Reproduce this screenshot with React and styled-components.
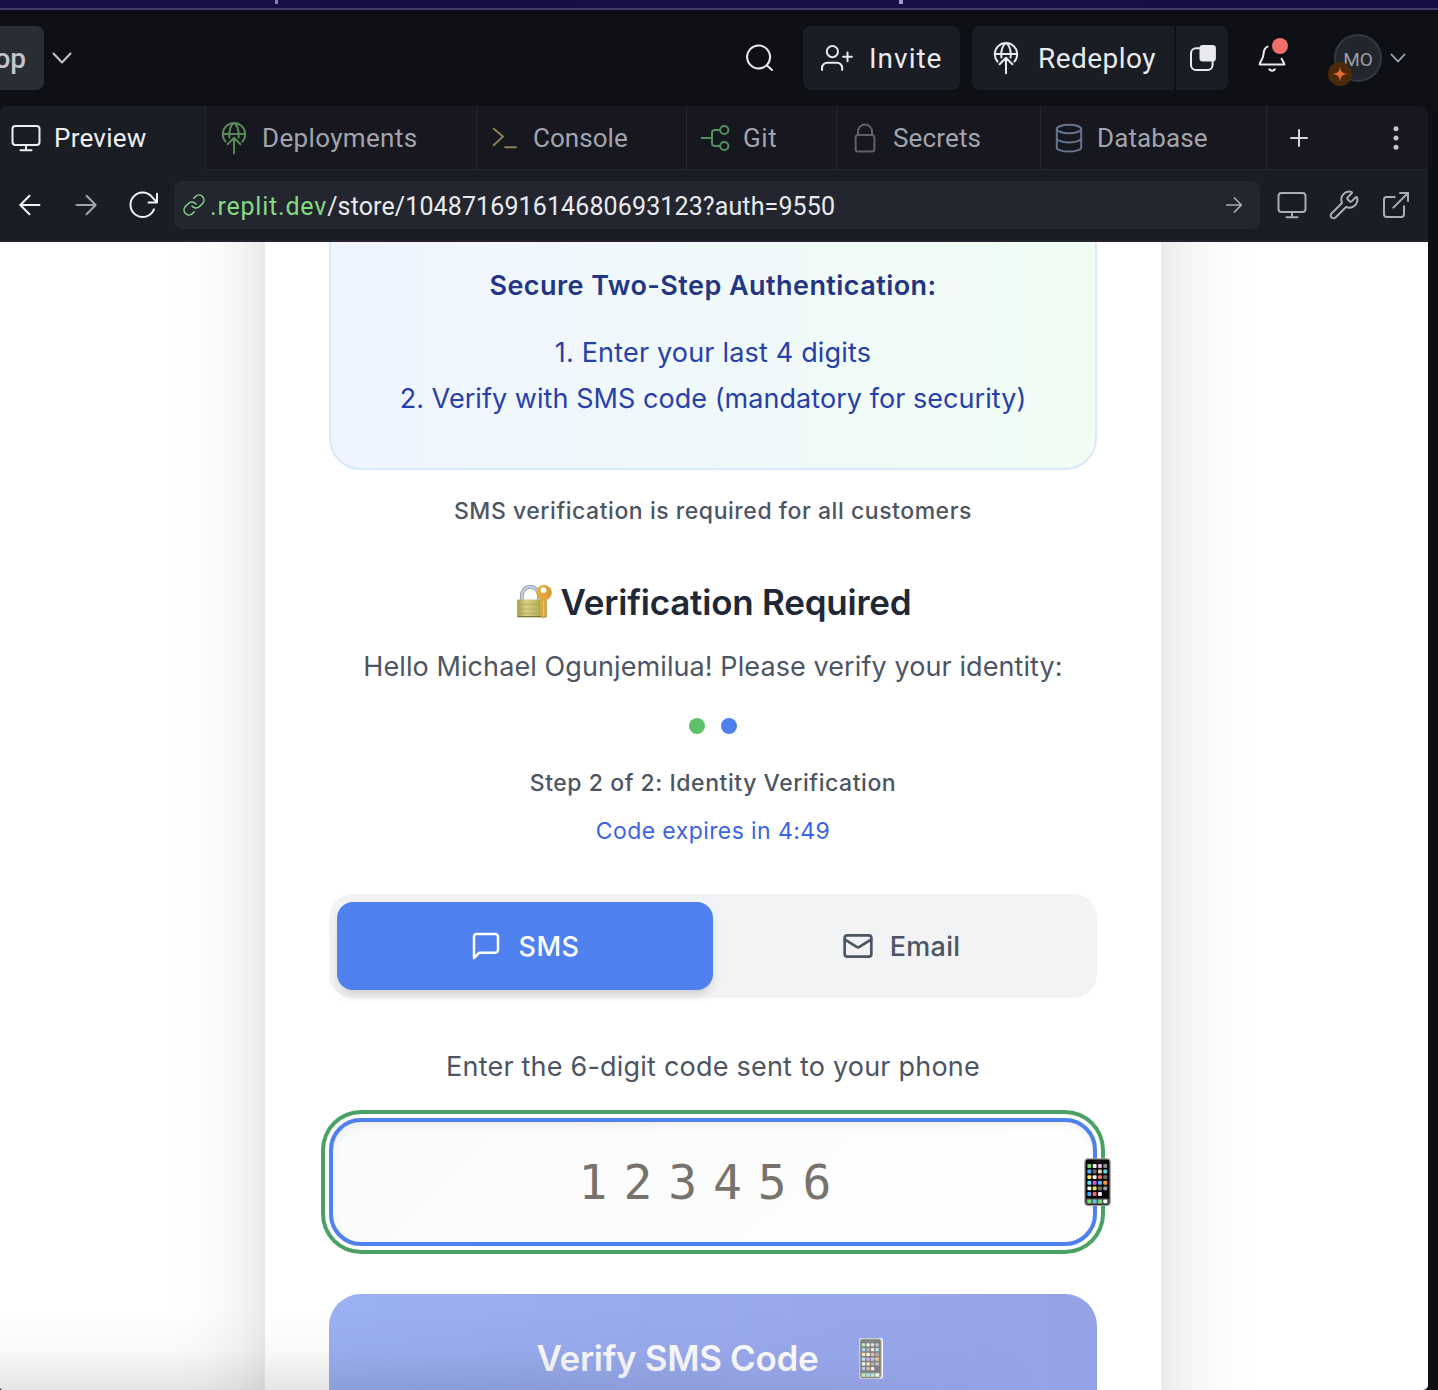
import React from "react";
import styled, { createGlobalStyle } from "styled-components";
import { Wrench, ExternalLink, Link as LinkIcon, Mail } from "lucide-react";

const Global = createGlobalStyle`
  * { box-sizing: border-box; }
  html, body { margin: 0; padding: 0; background: #0f1015; }
  body { overflow: hidden; }
  button, input { font: inherit; border: 0; margin: 0; padding: 0; background: none; color: inherit; }
  svg { display: block; flex: none; }
  p, h2, h3 { margin: 0; }
`;

const Shell = styled.div`
  width: 1438px;
  height: 1390px;
  display: flex;
  flex-direction: column;
  background: #0e0f14;
  font-family: Roboto, "Liberation Sans", sans-serif;
  color: #e9eaee;
  overflow: hidden;
`;

const Backdrop = styled.div`
  height: 10px;
  flex: none;
  border-bottom: 2px solid #443d69;
  background:
    linear-gradient(#8580a8, #8580a8) 275px 0 / 3px 4px no-repeat,
    linear-gradient(#a29fc4, #a29fc4) 899px 0 / 4px 4px no-repeat,
    linear-gradient(90deg, #1a0f45, #160e42 30%, #191048 60%, #170c42);
`;

const Header = styled.header`
  height: 96px;
  flex: none;
  display: flex;
  align-items: center;
  background: #0f1015;
`;

const AppName = styled.div`
  width: 44px;
  height: 64px;
  padding-right: 18px;
  display: flex;
  align-items: center;
  justify-content: flex-end;
  border-radius: 0 8px 8px 0;
  background: #2b2d36;
  color: #c3c5cb;
  font-size: 28px;
  font-weight: 500;
  overflow: hidden;
  margin-right: 8px;
`;

const Spacer = styled.div`
  flex: 1;
`;

const HeaderButton = styled.button`
  height: 64px;
  width: ${(p) => p.$width}px;
  padding-left: ${(p) => p.$pad}px;
  display: flex;
  align-items: center;
  gap: ${(p) => p.$gap || 0}px;
  background: #1b1d24;
  border-radius: ${(p) => p.$radius || "8px"};
  font-size: 28px;
  font-weight: 450;
  letter-spacing: ${(p) => p.$track || 0}px;
`;

const IconButton = styled.button`
  display: flex;
  position: relative;
  color: ${(p) => p.$color || "#e9eaee"};
  margin-right: ${(p) => p.$after || 0}px;
`;

const ButtonPair = styled.div`
  display: flex;
  gap: 2px;
  margin: 0 28px 0 12px;
`;

const AlertDot = styled.span`
  position: absolute;
  left: 16px;
  top: -4px;
  width: 16px;
  height: 16px;
  border-radius: 50%;
  background: #ef706b;
`;

const Avatar = styled.div`
  position: relative;
  width: 48px;
  height: 48px;
  border-radius: 50%;
  border: 2px solid #343640;
  background: #23252d;
  color: #9b9da6;
  display: flex;
  align-items: center;
  justify-content: center;
  font-size: 19px;
  padding-top: 2px;
  margin: 0 8px 0 46px;
`;

const Badge = styled.span`
  position: absolute;
  left: -8px;
  top: 26px;
  width: 24px;
  height: 24px;
  border-radius: 50%;
  background: #4b290b;
`;

const Panel = styled.main`
  width: 1428px;
  flex: 1;
  min-height: 0;
  display: flex;
  flex-direction: column;
  border-radius: 6px 10px 5px 3px;
  background: #1b1d24;
  overflow: hidden;
`;

const Tabs = styled.nav`
  height: 64px;
  flex: none;
  display: flex;
`;

const Tab = styled.div`
  width: ${(p) => p.$width}px;
  display: flex;
  align-items: center;
  gap: 12px;
  padding-left: ${(p) => (p.$active ? 10 : 12)}px;
  font-size: 26px;
  font-weight: ${(p) => (p.$active ? 450 : 400)};
  letter-spacing: ${(p) => p.$track}px;
  color: ${(p) => (p.$active ? "#eeeff2" : "#a2a4ad")};
  background: ${(p) => (p.$active ? "#1b1d24" : "#17171f")};
  border-left: ${(p) => (p.$active ? "0" : "1px solid #25262e")};
  border-bottom: ${(p) => (p.$active ? "0" : "1px solid #25262e")};
`;

const TabTools = styled.div`
  flex: 1;
  display: flex;
  align-items: center;
  justify-content: space-between;
  padding: 0 16px;
  background: #17171f;
  border-left: 1px solid #25262e;
  border-bottom: 1px solid #25262e;
`;

const Toolbar = styled.div`
  height: 72px;
  flex: none;
  display: flex;
  align-items: center;
  padding-left: 14px;
  border-bottom: 2px solid #25212e;
  color: #abadb6;
`;

const AddressBar = styled.div`
  width: 1086px;
  height: 48px;
  margin-right: 16px;
  padding: 0 10px 0 8px;
  display: flex;
  align-items: center;
  border-radius: 8px;
  background: #23262e;
  color: #85d983;
`;

const Host = styled.span`
  padding-top: 2px;
  margin-left: 4px;
  font-size: 25px;
  letter-spacing: 0.8px;
`;

const Path = styled.span`
  padding-top: 2px;
  flex: 1;
  color: #e9eaee;
  font-size: 25px;
  letter-spacing: 0.12px;
`;

const PreviewPage = styled.section`
  position: relative;
  flex: 1;
  min-height: 0;
  padding-left: 265px;
  background: #fff;
  overflow: hidden;
  font-family: Inter, "Liberation Sans", sans-serif;
`;

const Card = styled.div`
  width: 896px;
  height: 2400px;
  margin-top: -500px;
  padding: 460px 64px 0;
  display: flex;
  flex-direction: column;
  align-items: center;
  background: #fff;
  box-shadow: 0 50px 100px -24px rgba(0, 0, 0, 0.25);
`;

const InfoBox = styled.div`
  width: 100%;
  height: 268px;
  flex: none;
  padding-top: 62px;
  border: 2px solid #dbe8fc;
  border-radius: 32px;
  background: linear-gradient(90deg, #eff5ff, #f1fdf5);
  text-align: center;
  white-space: nowrap;
`;

const InfoTitle = styled.h3`
  font-size: 27px;
  line-height: 40px;
  font-weight: 600;
  letter-spacing: 0.44px;
  color: #233583;
  margin-bottom: 24px;
`;

const InfoStep = styled.p`
  font-size: 27px;
  line-height: 46px;
  letter-spacing: ${(p) => p.$track}px;
  color: #2740a9;
`;

const Line = styled.p`
  margin-top: ${(p) => p.$top}px;
  font-size: ${(p) => (p.$small ? 23 : 27)}px;
  line-height: ${(p) => (p.$small ? 32 : 40)}px;
  font-weight: ${(p) => (p.$medium ? 500 : 400)};
  letter-spacing: ${(p) => p.$track}px;
  color: ${(p) => p.$color || "#4c5563"};
  white-space: nowrap;
`;

const Title = styled.h2`
  margin-top: 55px;
  display: flex;
  align-items: center;
  gap: 8px;
  font-size: 35px;
  line-height: 40px;
  font-weight: 600;
  letter-spacing: -0.22px;
  color: #1f2836;
`;

const Dots = styled.div`
  display: flex;
  gap: 16px;
  margin-top: 31px;
`;

const Dot = styled.span`
  width: 16px;
  height: 16px;
  border-radius: 50%;
  background: ${(p) => p.$color};
`;

const Switcher = styled.div`
  width: 100%;
  height: 104px;
  flex: none;
  margin-top: 47px;
  padding: 8px;
  display: flex;
  border-radius: 24px;
  background: #f2f3f5;
`;

const Method = styled.button`
  flex: 1;
  display: flex;
  align-items: center;
  justify-content: center;
  gap: 16px;
  border-radius: 16px;
  font-size: 27px;
  font-weight: ${(p) => (p.$active ? 450 : 500)};
  letter-spacing: ${(p) => p.$track}px;
  color: ${(p) => (p.$active ? "#fff" : "#4c5563")};
  background: ${(p) => (p.$active ? "#4f81ee" : "transparent")};
  box-shadow: ${(p) =>
    p.$active
      ? "0 8px 12px -2px rgba(0,0,0,.1), 0 4px 8px -4px rgba(0,0,0,.1)"
      : "none"};
`;

const CodeField = styled.div`
  position: relative;
  width: 100%;
  height: 128px;
  flex: none;
  margin-top: 31px;
`;

const CodeInput = styled.input`
  && {
    width: 100%;
    height: 100%;
    display: block;
    border: 4px solid #4f81ee;
    border-radius: 32px;
    background: linear-gradient(135deg, #f9fafb, #ffffff);
    box-shadow: 0 0 0 4px #fff, 0 0 0 8px #4ba164,
      inset 0 4px 8px rgba(0, 0, 0, 0.05);
    outline: 0;
    text-align: center;
    font: 48px "DejaVu Sans Mono", monospace;
    letter-spacing: 15.9px;
  }
  &::placeholder {
    color: #78726d;
    opacity: 1;
  }
`;

const FieldPhone = styled.span`
  position: absolute;
  left: 755px;
  top: 40px;
`;

const Submit = styled.button`
  width: 100%;
  height: 128px;
  flex: none;
  margin-top: 48px;
  padding-right: 7px;
  display: flex;
  align-items: center;
  justify-content: center;
  gap: 41px;
  border-radius: 32px;
  background: linear-gradient(90deg, #9bb1f3, #96a2e6);
  color: #fbfbfd;
  font-size: 35px;
  font-weight: 600;
  letter-spacing: -0.32px;
`;

const Faded = styled.span`
  border-radius: 3px;
  background: #fff;
  svg {
    opacity: 0.5;
  }
`;

const FootShade = styled.div`
  position: absolute;
  left: 0;
  bottom: 0;
  width: 1160px;
  height: 80px;
  background: linear-gradient(to top, rgba(0, 0, 0, 0.1), rgba(0, 0, 0, 0.025) 50%, transparent);
  mask-image: linear-gradient(90deg, #000 45%, transparent 90%);
`;

function Glyph({ w = 32, h = 32, color = "currentColor", sw = 2, children }) {
  return (
    <svg width={w} height={h} viewBox={`0 0 ${w} ${h}`} fill="none" stroke={color}
      strokeWidth={sw} strokeLinecap="round" strokeLinejoin="round">
      {children}
    </svg>
  );
}

const Globe = ({ color }) => (
  <Glyph h={36} color={color}>
    <path d="M7.6 21.6A11.2 11.2 0 1 1 24.4 21.6M4.8 14H27.2M16 2.8C12 6 10.8 11 11.4 17.5M16 2.8C20 6 21.2 11 20.6 17.5M16 18V33.3M9.6 24.2L16 17.8L22.4 24.2" />
  </Glyph>
);

const Monitor = ({ color }) => (
  <Glyph color={color}>
    <rect x="2.5" y="4" width="27" height="19" rx="3" />
    <path d="M16 23.5V28M10.5 28.2H21.5" />
  </Glyph>
);

const Chevron = ({ w, h, color, sw }) => (
  <Glyph w={w} h={h} color={color} sw={sw}>
    <path d={`M1.5 1.5L${w / 2} ${h - 1.5}L${w - 1.5} 1.5`} />
  </Glyph>
);

const APPS = [
  ["#7be06f", "#f2f2f2", "#e0b5f0", "#8c8c8c"],
  ["#4fb0f5", "#6b6b6f", "#ecd0b0", "#62d5f5"],
  ["#fbe36a", "#f5f5f5", "#ee7065", "#6b6b6b"],
  ["#6fdcf0", "#d94ff0", "#4fb4f5", "#f59a35"],
  ["#f7f7f7", "#f5e04f", "#707070", "#9a9a9a"],
  ["#4fa8f5", "#f06a60", "#f5f5f5"],
];
const DOCK = ["#7be06f", "#55c8f5", "#6fe070", "#f5f5f5"];

const Phone = ({ h }) => (
  <svg width={(h * 27) / 48} height={h} viewBox="0 0 27 48" role="img" aria-label="phone">
    <rect x="0.9" y="0.9" width="25.2" height="46.4" rx="3" fill="#0a0a0b" stroke="#9a9a9c" strokeWidth="1.2" />
    <path d="M10 3.4h7" stroke="#2a2a2c" strokeWidth="1" />
    <rect x="2.2" y="40.6" width="22.6" height="5.4" rx="1" fill="#55575a" />
    {APPS.map((row, y) =>
      row.map((c, x) => (
        <rect key={`${x}-${y}`} x={3.4 + x * 5.3} y={6 + y * 5.6} width="3.9" height="3.9" rx="1" fill={c} />
      ))
    )}
    {DOCK.map((c, x) => (
      <rect key={x} x={3.4 + x * 5.3} y="41.4" width="3.9" height="3.9" rx="1" fill={c} />
    ))}
  </svg>
);

const LockKey = () => (
  <svg width="38" height="36" viewBox="0 0 38 36" role="img" aria-label="locked with key">
    <defs>
      <linearGradient id="brass" x1="0" x2="1">
        <stop offset="0" stopColor="#a39c4e" />
        <stop offset=".3" stopColor="#d6d184" />
        <stop offset=".65" stopColor="#bdb765" />
        <stop offset="1" stopColor="#8e873c" />
      </linearGradient>
      <linearGradient id="key" x1="0" x2="1">
        <stop offset="0" stopColor="#e7ae42" />
        <stop offset="1" stopColor="#d69b31" />
      </linearGradient>
    </defs>
    <path d="M6.8 17V11.8a8.6 9 0 0 1 17.2 0V17" fill="none" stroke="#8794a3" strokeWidth="3.8" />
    <path d="M6.8 17V11.8a8.6 9 0 0 1 17.2 0V17" fill="none" stroke="#c6d3e2" strokeWidth="2.2" />
    <rect x="2.2" y="15.6" width="29.4" height="17.6" rx="1" fill="url(#brass)" />
    <path d="M2.4 20.6H31.4M2.4 25H31.4M2.4 29.4H31.4" stroke="#a8a254" strokeWidth=".6" />
    <path d="M2.6 32.6H31.2" stroke="#7c7533" strokeWidth="1.2" />
    <path fillRule="evenodd" fill="url(#key)"
      d="M28.8 1a7.6 7.6 0 0 0-3.4 14.3V17.2l-.4 2 1 1.4-1.2 1.8 1.2 2-1.2 2 1.2 1.8-1.2 2.2 1.5 2.2L28.5 34.6l2.8-3V15.9A7.6 7.6 0 0 0 28.8 1Zm-.3 2.2a2.9 2.9 0 1 1 0 5.8 2.9 2.9 0 0 1 0-5.8Z" />
    <path d="M28.7 16.5V32" stroke="#f2c768" strokeWidth="1" />
  </svg>
);

export default function App() {
  return (
    <Shell>
      <Global />
      <Backdrop />
      <Header>
        <AppName>op</AppName>
        <Chevron w={20} h={12} color="#c3c5cb" />
        <Spacer />
        <IconButton $after={27}>
          <Glyph>
            <circle cx="14.6" cy="15" r="11.5" />
            <path d="M23 23.4L28 28" />
          </Glyph>
        </IconButton>
        <HeaderButton $width={157} $pad={13} $gap={13} $track={1}>
          <Glyph w={40}>
            <circle cx="16.4" cy="9.6" r="5.6" />
            <path d="M6 28V26a5.3 5.3 0 0 1 5.3-5.3h9.6A5.3 5.3 0 0 1 26.2 26v2M31.5 10.4v8.8M27.1 14.8h8.8" />
          </Glyph>
          Invite
        </HeaderButton>
        <ButtonPair>
          <HeaderButton $width={202} $pad={18} $gap={16} $track={0.45} $radius="8px 0 0 8px">
            <Globe />
            Redeploy
          </HeaderButton>
          <HeaderButton $width={52} $pad={10} $radius="0 8px 8px 0">
            <Glyph>
              <rect x="5" y="6.3" width="21.6" height="21.6" rx="5" />
              <rect x="13.5" y="3" width="16.4" height="16.4" rx="3.2" fill="#e9eaee" stroke="none" />
            </Glyph>
          </HeaderButton>
        </ButtonPair>
        <IconButton>
          <Glyph>
            <path d="M11.5 4.6C8.3 6 7.8 8.6 7.6 11.5C7.3 17 4.6 18.2 3.6 22.4H28.4C27.8 20.2 26.6 18.8 25.6 16.8M13.4 27.4a3 2.2 0 0 0 5.4 0" />
          </Glyph>
          <AlertDot />
        </IconButton>
        <Avatar>
          MO
          <Badge>
            <Glyph w={24} h={24} color="none">
              <path d="M12 4.2C12.6 9.8 14 11.2 20 12C14 12.8 12.6 14.2 12 19.8C11.4 14.2 10 12.8 4 12C10 11.2 11.4 9.8 12 4.2Z" fill="#ea6c2b" />
            </Glyph>
          </Badge>
        </Avatar>
        <IconButton $color="#abadb6" $after={32}>
          <Chevron w={16} h={10} sw={1.8} />
        </IconButton>
      </Header>

      <Panel>
        <Tabs>
          <Tab $active $width={205} $track={0.25}><Monitor />Preview</Tab>
          <Tab $width={271} $track={0.35}><Globe color="#568a57" />Deployments</Tab>
          <Tab $width={210} $track={0.05}>
            <Glyph color="#8b7f54"><path d="M4.7 6.8L14 14.6L4.7 23.2M16.2 25.3H27" /></Glyph>
            Console
          </Tab>
          <Tab $width={150} $track={0.6}>
            <Glyph color="#50925a">
              <path d="M2.6 16H13M20.8 8H16a3 3 0 0 0-3 3v10a3 3 0 0 0 3 3h4.8" />
              <circle cx="25.3" cy="8" r="4.1" />
              <circle cx="25.3" cy="24" r="4.1" />
            </Glyph>
            Git
          </Tab>
          <Tab $width={204} $track={0.15}>
            <Glyph color="#5f606b">
              <rect x="6.6" y="13" width="18.8" height="16.6" rx="2.5" />
              <path d="M9 13V9.6a7 7 0 0 1 14 0V13" />
            </Glyph>
            Secrets
          </Tab>
          <Tab $width={226} $track={0.1}>
            <Glyph color="#66768f">
              <ellipse cx="16" cy="7" rx="12.2" ry="4.2" />
              <path d="M3.8 7V25.4c0 2.3 5.4 4.2 12.2 4.2s12.2-1.9 12.2-4.2V7M3.8 16.2c0 2.3 5.4 4.2 12.2 4.2s12.2-1.9 12.2-4.2" />
            </Glyph>
            Database
          </Tab>
          <TabTools>
            <Glyph color="#d5d6dc"><path d="M16 8V24M8 16H24" /></Glyph>
            <Glyph color="none">
              <g fill="#c3c5cb">
                <circle cx="16" cy="6.8" r="2.5" />
                <circle cx="16" cy="16" r="2.5" />
                <circle cx="16" cy="25.2" r="2.5" />
              </g>
            </Glyph>
          </TabTools>
        </Tabs>

        <Toolbar>
          <IconButton $color="#f2f3f5" $after={24}>
            <Glyph><path d="M25.5 16H7M15.5 6.7L6.3 16L15.5 25.3" /></Glyph>
          </IconButton>
          <IconButton $color="#a2a4ad" $after={25}>
            <Glyph><path d="M6.5 16H25M16.5 6.7L25.7 16L16.5 25.3" /></Glyph>
          </IconButton>
          <IconButton $color="#f2f3f5" $after={15}>
            <Glyph><path d="M27 20.4A12.2 12.2 0 1 1 24.9 7.8L29.8 13.2M30 4.8V13.6H21.5" /></Glyph>
          </IconButton>
          <AddressBar>
            <LinkIcon size={24} strokeWidth={1.5} />
            <Host>.replit.dev</Host>
            <Path>/store/104871691614680693123?auth=9550</Path>
            <Glyph color="#abadb6" sw={1.7}><path d="M8.8 16H23M16.4 9L23.4 16L16.4 23" /></Glyph>
          </AddressBar>
          <IconButton $color="#abadb6" $after={20}><Monitor /></IconButton>
          <IconButton $color="#abadb6" $after={20}><Wrench size={32} strokeWidth={1.5} /></IconButton>
          <IconButton $color="#abadb6"><ExternalLink size={32} strokeWidth={1.5} /></IconButton>
        </Toolbar>

        <PreviewPage>
          <Card>
            <InfoBox>
              <InfoTitle>Secure Two-Step Authentication:</InfoTitle>
              <InfoStep $track={0.18}>1. Enter your last 4 digits</InfoStep>
              <InfoStep $track={0.05}>2. Verify with SMS code (mandatory for security)</InfoStep>
            </InfoBox>
            <Line $small $medium $top={25} $track={0.54}>SMS verification is required for all customers</Line>
            <Title><LockKey />Verification Required</Title>
            <Line $top={25} $track={0.09}>Hello Michael Ogunjemilua! Please verify your identity:</Line>
            <Dots>
              <Dot $color="#5fc26b" />
              <Dot $color="#4f81ee" />
            </Dots>
            <Line $small $medium $top={33} $track={0.55}>Step 2 of 2: Identity Verification</Line>
            <Line $small $top={16} $track={0.42} $color="#3a63e6">Code expires in 4:49</Line>
            <Switcher>
              <Method $active $track={0.5}>
                <Glyph sw={2.5}>
                  <path d="M28 20a2.67 2.67 0 0 1-2.67 2.67H9.33L4 28V6.67A2.67 2.67 0 0 1 6.67 4h18.66A2.67 2.67 0 0 1 28 6.67Z" />
                </Glyph>
                SMS
              </Method>
              <Method $track={0.3}><Mail size={32} strokeWidth={2} />Email</Method>
            </Switcher>
            <Line $top={49} $track={0.21}>Enter the 6-digit code sent to your phone</Line>
            <CodeField>
              <CodeInput placeholder="123456" />
              <FieldPhone><Phone h={48} /></FieldPhone>
            </CodeField>
            <Submit>
              Verify SMS Code
              <Faded><Phone h={41} /></Faded>
            </Submit>
          </Card>
          <FootShade />
        </PreviewPage>
      </Panel>
    </Shell>
  );
}
